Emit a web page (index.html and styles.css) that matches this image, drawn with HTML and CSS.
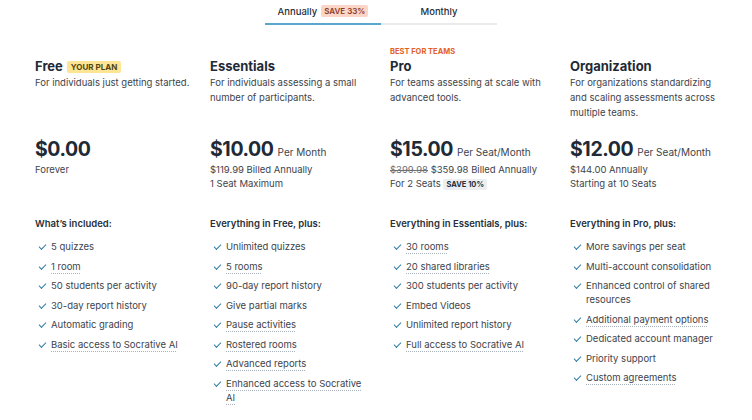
FILE: index.html
```html
<!DOCTYPE html>
<html lang="en">
<head>
<meta charset="utf-8">
<title>Plans</title>
<link rel="stylesheet" href="styles.css">
</head>
<body>
<div class="tabs">
  <div class="tab active">Annually <span class="save">SAVE 33%</span></div>
  <div class="tab">Monthly</div>
</div>
<div class="plans">
  <section class="plan">
    <div class="label"></div>
    <h2 class="title">Free <span class="yours">YOUR PLAN</span></h2>
    <p class="desc">For individuals just getting started.</p>
    <div class="price">$0.00</div>
    <div class="sub">Forever</div>
    <h3 class="inc">What’s included:</h3>
    <ul class="feats">
      <li><span>5 quizzes</span></li>
      <li><span class="tip">1 room</span></li>
      <li><span>50 students per activity</span></li>
      <li><span>30-day report history</span></li>
      <li><span>Automatic grading</span></li>
      <li><span class="tip">Basic access to Socrative AI</span></li>
    </ul>
  </section>
  <section class="plan">
    <div class="label"></div>
    <h2 class="title">Essentials</h2>
    <p class="desc">For individuals assessing a small number of participants.</p>
    <div class="price">$10.00 <small>Per Month</small></div>
    <div class="sub">$119.99 Billed Annually<br>1 Seat Maximum</div>
    <h3 class="inc">Everything in Free, plus:</h3>
    <ul class="feats">
      <li><span>Unlimited quizzes</span></li>
      <li><span class="tip">5 rooms</span></li>
      <li><span>90-day report history</span></li>
      <li><span>Give partial marks</span></li>
      <li><span class="tip">Pause activities</span></li>
      <li><span class="tip">Rostered rooms</span></li>
      <li><span class="tip">Advanced reports</span></li>
      <li><span class="tip">Enhanced access to Socrative AI</span></li>
    </ul>
  </section>
  <section class="plan">
    <div class="label">BEST FOR TEAMS</div>
    <h2 class="title">Pro</h2>
    <p class="desc">For teams assessing at scale with advanced tools.</p>
    <div class="price">$15.00 <small>Per Seat/Month</small></div>
    <div class="sub"><s>$399.98</s> $359.98 Billed Annually<br>For 2 Seats <span class="ten">SAVE 10%</span></div>
    <h3 class="inc">Everything in Essentials, plus:</h3>
    <ul class="feats">
      <li><span class="tip">30 rooms</span></li>
      <li><span class="tip">20 shared libraries</span></li>
      <li><span>300 students per activity</span></li>
      <li><span>Embed Videos</span></li>
      <li><span>Unlimited report history</span></li>
      <li><span class="tip">Full access to Socrative AI</span></li>
    </ul>
  </section>
  <section class="plan">
    <div class="label"></div>
    <h2 class="title">Organization</h2>
    <p class="desc">For organizations standardizing and scaling assessments across multiple teams.</p>
    <div class="price">$12.00 <small>Per Seat/Month</small></div>
    <div class="sub">$144.00 Annually<br>Starting at 10 Seats</div>
    <h3 class="inc">Everything in Pro, plus:</h3>
    <ul class="feats">
      <li><span>More savings per seat</span></li>
      <li><span>Multi-account consolidation</span></li>
      <li><span>Enhanced control of shared resources</span></li>
      <li><span class="tip">Additional payment options</span></li>
      <li><span>Dedicated account manager</span></li>
      <li><span>Priority support</span></li>
      <li><span class="tip">Custom agreements</span></li>
    </ul>
  </section>
</div>
</body>
</html>
```
FILE: styles.css
```css
* { box-sizing: border-box; }
body {
  margin: 0;
  background: #fff;
  font-family: Inter, "Noto Sans", sans-serif;
  color: #3d444d;
  font-size: 9.5px;
}
.tabs {
  display: flex;
  width: 232px;
  margin: 0 0 0 265px;
  height: 25px;
}
.tab {
  flex: 1;
  display: flex;
  align-items: center;
  justify-content: center;
  gap: 4px;
  font-size: 9.5px;
  font-weight: 500;
  color: #27303a;
  border-bottom: 2px solid #e8eaec;
  padding-bottom: 1px;
}
.tab.active { border-bottom-color: #5aa6cf; }
.save {
  background: #fbd5c6;
  color: #8c3b2b;
  font-size: 8px;
  font-weight: 600;
  padding: 1px 3px;
  border-radius: 2px;
}
.plans {
  display: grid;
  grid-template-columns: 175px 180px 180px 1fr;
  padding: 21px 0 0 35px;
}
.plan { max-width: 155px; }
.label {
  height: 11px;
  font-size: 7.5px;
  font-weight: 700;
  color: #e5612a;
  line-height: 11px;
}
.title {
  margin: 1px 0 0;
  font-size: 13px;
  line-height: 17px;
  font-weight: 700;
  color: #1f2a37;
  display: flex;
  align-items: center;
  gap: 4px;
}
.yours {
  background: #fde594;
  color: #4f4412;
  font-size: 8px;
  font-weight: 700;
  line-height: 12px;
  padding: 0 4px;
  border-radius: 2px;
}
.desc {
  margin: 0;
  line-height: 15px;
  height: 62px;
}
.price {
  display: flex;
  align-items: baseline;
  gap: 4px;
  height: 24px;
  font-size: 19.5px;
  font-weight: 700;
  color: #1f2a37;
  line-height: 24px;
  letter-spacing: -0.4px;
  white-space: nowrap;
}
.price small {
  font-size: 10px;
  font-weight: 400;
  color: #3d444d;
  letter-spacing: 0;
  line-height: 12px;
}
.sub {
  margin-top: 2px;
  line-height: 14px;
  height: 28px;
  white-space: nowrap;
}
.sub s { color: #6b727a; }
.ten {
  background: #eceef1;
  color: #27303a;
  font-size: 7.5px;
  font-weight: 700;
  padding: 1px 3px;
  border-radius: 2px;
}
.inc {
  margin: 26px 0 0;
  font-size: 9.5px;
  font-weight: 600;
  color: #27303a;
  line-height: 14px;
  white-space: nowrap;
}
.feats {
  list-style: none;
  margin: 9px 0 0;
  padding: 0;
}
.feats li {
  position: relative;
  padding-left: 16px;
  line-height: 14px;
  margin-bottom: 5.5px;
}
.feats li::before {
  content: "";
  position: absolute;
  left: 4px;
  top: 4px;
  width: 6px;
  height: 3px;
  border-left: 1.2px solid #2f7ea6;
  border-bottom: 1.2px solid #2f7ea6;
  transform: rotate(-45deg);
}
.tip {
  text-decoration: underline dotted #a9b3bd;
  text-underline-offset: 3px;
  text-decoration-thickness: 1px;
}
```
